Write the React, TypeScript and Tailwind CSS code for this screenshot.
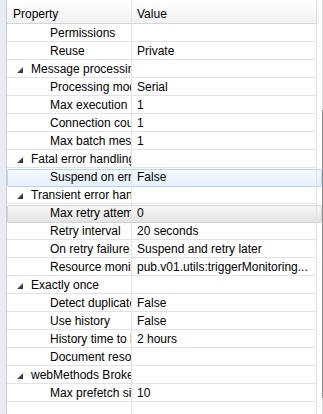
import React from "react";

type Row = {
  label: string;
  value?: string;
  group?: boolean;
  state?: "hover" | "selected";
};

const rows: Row[] = [
  { label: "Permissions" },
  { label: "Reuse", value: "Private" },
  { label: "Message processing", group: true },
  { label: "Processing mode", value: "Serial" },
  { label: "Max execution threads", value: "1" },
  { label: "Connection count", value: "1" },
  { label: "Max batch messages", value: "1" },
  { label: "Fatal error handling", group: true },
  { label: "Suspend on error", value: "False", state: "hover" },
  { label: "Transient error handling", group: true },
  { label: "Max retry attempts", value: "0", state: "selected" },
  { label: "Retry interval", value: "20 seconds" },
  { label: "On retry failure", value: "Suspend and retry later" },
  { label: "Resource monitoring service", value: "pub.v01.utils:triggerMonitoring..." },
  { label: "Exactly once", group: true },
  { label: "Detect duplicates", value: "False" },
  { label: "Use history", value: "False" },
  { label: "History time to live", value: "2 hours" },
  { label: "Document resolver service" },
  { label: "webMethods Broker", group: true },
  { label: "Max prefetch size", value: "10" },
  { label: "" },
];

function Expander() {
  return (
    <svg width="6" height="6" viewBox="0 0 6 6" className="shrink-0">
      <defs>
        <linearGradient id="tri" x1="0" y1="0" x2="1" y2="1">
          <stop offset="0" stopColor="#7a7a7a" />
          <stop offset="1" stopColor="#262626" />
        </linearGradient>
      </defs>
      <polygon points="6,0 6,6 0,6" fill="url(#tri)" />
    </svg>
  );
}

function PropertyRow({ row }: { row: Row }) {
  const line = row.state ? "border-b-transparent" : "border-b-[#e3e3e3]";
  return (
    <div className="relative flex h-[18px] shrink-0">
      {row.state === "hover" && (
        <span className="absolute inset-x-0 top-px -bottom-px rounded-[2px] border border-[#b3d3fa] bg-gradient-to-b from-[#f5faff] to-[#e6f1fd]" />
      )}
      {row.state === "selected" && (
        <span className="absolute inset-x-0 top-px -bottom-px rounded-[2px] border border-[#d2d2d2] bg-gradient-to-b from-[#f7f7f7] to-[#e3e3e3]" />
      )}
      <div
        className={`relative flex w-[125px] items-center overflow-hidden whitespace-nowrap border-b border-r border-r-[#e3e3e3] pt-[2px] ${line} ${
          row.group ? "pl-[10px]" : "pl-[43px]"
        }`}
      >
        {row.group && (
          <span className="mr-[8px] mt-[1px] flex">
            <Expander />
          </span>
        )}
        <span className="leading-[15px]">{row.label}</span>
      </div>
      <div
        className={`relative flex w-[185px] items-center overflow-hidden whitespace-nowrap border-b border-r border-r-[#e3e3e3] pl-[5px] pt-[2px] ${line}`}
      >
        <span className="leading-[15px]">{row.value}</span>
      </div>
    </div>
  );
}

export default function App() {
  return (
    <div className="flex h-[414px] w-[323px] overflow-hidden bg-white font-['Liberation_Sans',Arial,sans-serif] text-[12px] text-black">
      <div className="w-[7px] shrink-0 border-r border-[#c9cfda] bg-[#e7ebf3]" />
      <div className="flex w-[315px] shrink-0 flex-col">
        <div className="flex h-[24px] shrink-0">
          <div className="flex w-[125px] items-center border-b border-r border-b-[#d5d5d5] border-r-[#e6e6e6] bg-gradient-to-b from-white to-[#f0f1f3] pl-[6px] pt-[4px]">
            Property
          </div>
          <div className="flex w-[185px] items-center border-b border-r border-b-[#d5d5d5] border-r-[#e0e0e0] bg-gradient-to-b from-white to-[#f0f1f3] pl-[5px] pt-[4px]">
            Value
          </div>
          <div className="w-[2px] bg-gradient-to-b from-white to-[#f0f1f3]" />
        </div>
        {rows.map((row, i) => (
          <PropertyRow key={i} row={row} />
        ))}
      </div>
      <div className="flex w-px shrink-0 flex-col">
        <div className="h-[110px] bg-[#dcdcdc]" />
        <div className="h-[288px] bg-[#8c8c8c]" />
        <div className="flex-1 bg-[#dcdcdc]" />
      </div>
    </div>
  );
}
